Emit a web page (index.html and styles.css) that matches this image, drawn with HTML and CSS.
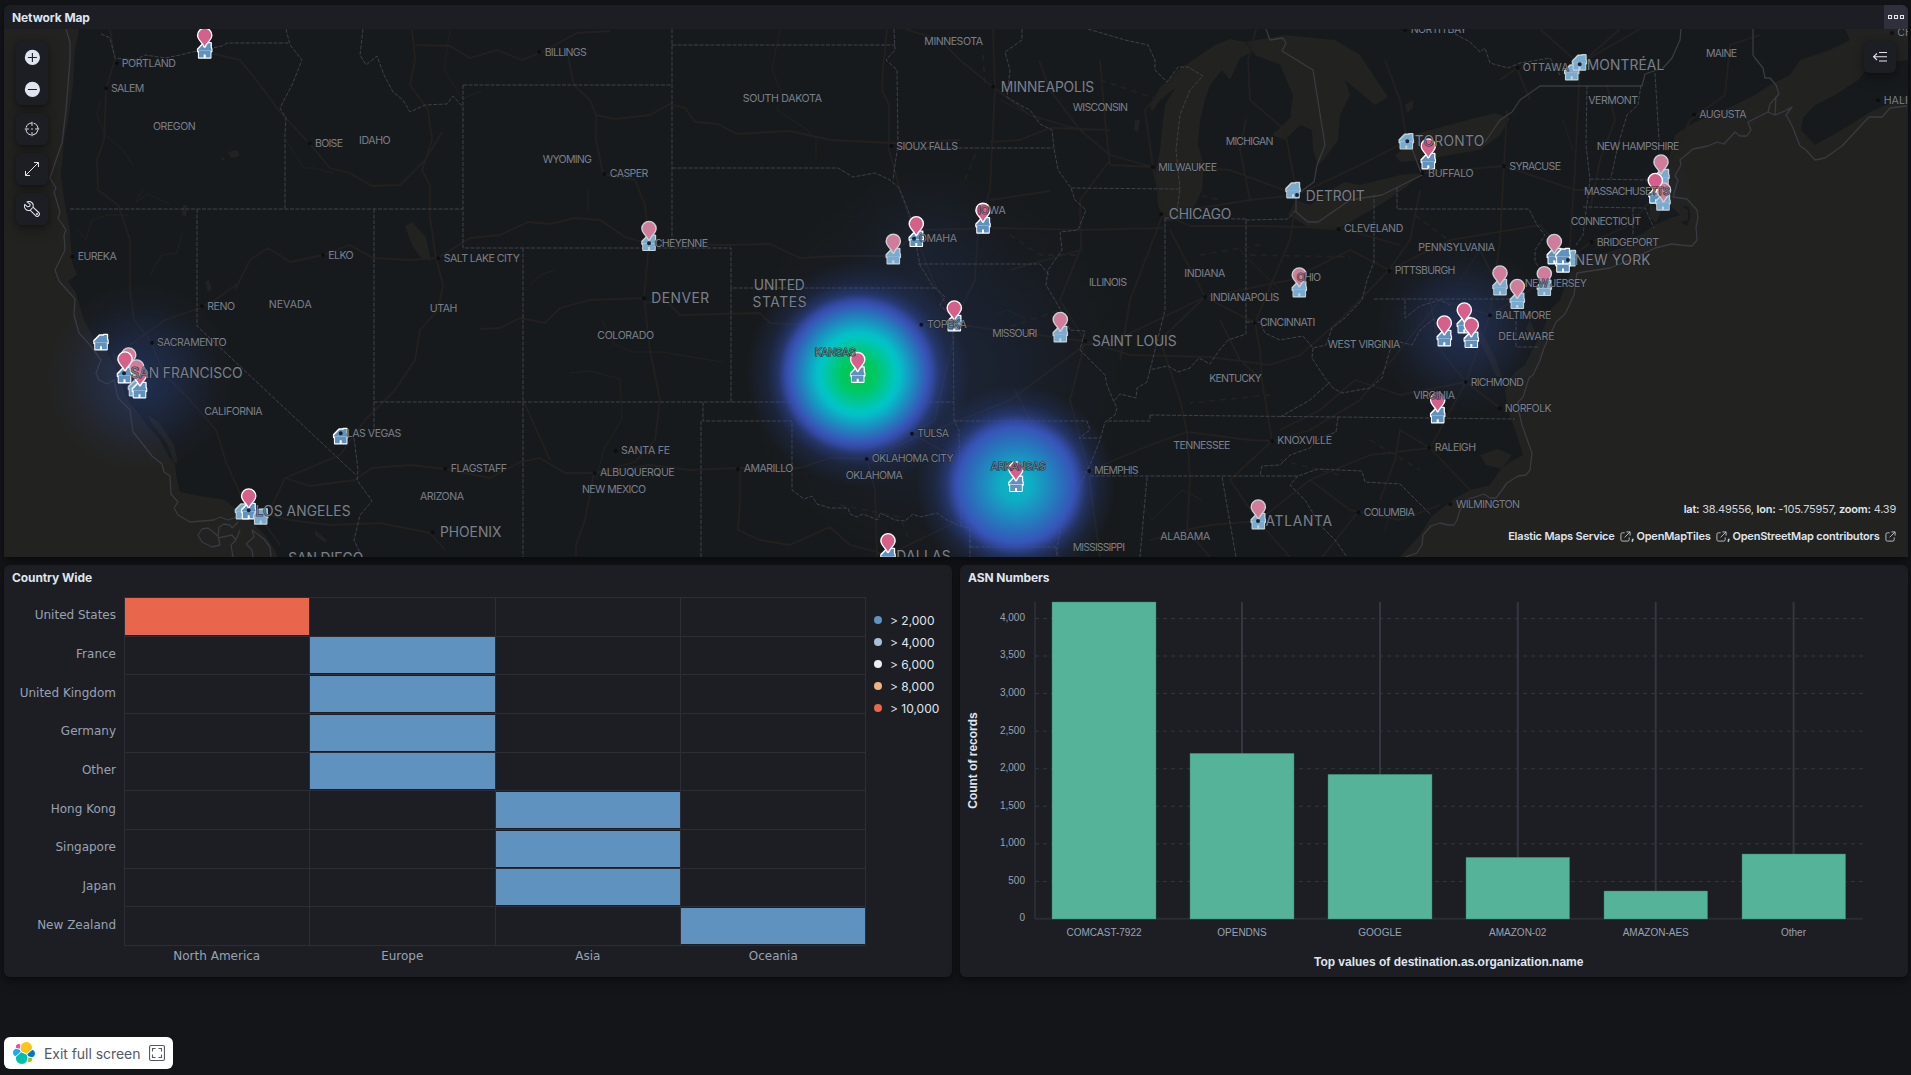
FILE: index.html
```html
<!DOCTYPE html>
<html lang="en">
<head>
<meta charset="utf-8">
<title>Network dashboard</title>
<link rel="stylesheet" href="styles.css">
</head>
<body>
<main class="dashboard">
  <section class="panel panel-map">
    <header class="panel-head">
      <h2 class="panel-title">Network Map</h2>
      <button class="panel-menu" aria-label="Panel options"><svg width="16" height="16" viewBox="0 0 16 16"><path fill="none" stroke="#dfe5ef" stroke-width="1.1" d="M.5 6.500h3v3h-3zM6.500 6.500h3v3h-3zM12.500 6.500h3v3h-3z"/></svg></button>
    </header>
    <div class="map">
      <svg class="map-canvas" viewBox="4 29 1904 528" width="1904" height="528">
        <defs>
          <radialGradient id="heat-hot"><stop offset="0" stop-color="#00c853"/><stop offset=".15" stop-color="#00c860"/><stop offset=".33" stop-color="#00c6c0"/><stop offset=".37" stop-color="#04bfc8"/><stop offset=".62" stop-color="#3853b6"/><stop offset=".66" stop-color="#3650b2" stop-opacity=".85"/><stop offset=".72" stop-color="#304ba6" stop-opacity=".5"/><stop offset=".82" stop-color="#2c479c" stop-opacity=".2"/><stop offset="1" stop-color="#2c479c" stop-opacity="0"/></radialGradient>
          <radialGradient id="heat-warm"><stop offset="0" stop-color="#08b6c6"/><stop offset=".15" stop-color="#0eaec4"/><stop offset=".58" stop-color="#3655b8"/><stop offset=".63" stop-color="#3650b2" stop-opacity=".85"/><stop offset=".71" stop-color="#304ba6" stop-opacity=".5"/><stop offset=".83" stop-color="#2c479c" stop-opacity=".2"/><stop offset="1" stop-color="#2c479c" stop-opacity="0"/></radialGradient>
          <radialGradient id="heat-low"><stop offset="0" stop-color="#2b488f" stop-opacity=".48"/><stop offset=".4" stop-color="#2b4488" stop-opacity=".3"/><stop offset=".75" stop-color="#2b4488" stop-opacity=".08"/><stop offset="1" stop-color="#2b4488" stop-opacity="0"/></radialGradient>
          <g id="home">
            <path class="halo" d="M-6.800-1.200-1.400-6.800H2.600v-.5h3.600v4.200L6.800-1.200V1.200H5.800v6.200H-5.800V1.200H-6.800z" stroke-width="2" stroke-linejoin="round"/>
            <path class="home-fill" d="M-6.800-.5-1.300-6.300H2.900v-.7h3v4L6.800-.5v.9H-6.800zM-5.800.8H5.800V7.200H1V4.200h-2V7.200h-4.800z"/>
          </g>
          <path id="pin" class="pin-fill" d="M0-3.900C-1.800-8.400-6.400-10.800-6.400-15a6.400 6.400 0 0 1 12.800 0C6.400-10.800 1.800-8.400 0-3.900z"/>
        </defs>
        <rect class="land" x="4" y="29" width="1904" height="528"/>
        <g class="water">
          <path d="M4 29H79L75 50 73 85 68 120 64 140 61 175 65 205 70 230 72 262 77 275 68 281 76 293 84 320 92 335 105 350 115 365 122 385 128 400 140 415 147 425 160 440 168 455 175 465 177 480 180 492 200 496 225 500 240 512 255 525 265 535 275 550 278 557H4z"/>
          <path d="M1400 557 1420 535 1431 517 1440 510 1455 498 1470 490 1490 485 1500 470 1510 462 1523 455 1515 430 1508 410 1505 390 1515 372 1525 365 1535 345 1545 325 1550 310 1560 300 1565 285 1572 270 1575 256 1600 246 1640 235 1655 225 1670 218 1680 215 1665 200 1663 170 1670 155 1675 135 1690 125 1710 115 1735 105 1755 95 1770 85 1790 75 1800 60 1830 50 1850 40 1845 29H1908V557z"/>
          <path d="M1190 62 1215 45 1230 39 1245 42 1252 52 1240 58 1230 80 1222 70 1210 85 1205 100 1200 120 1198 145 1204 165 1202 190 1195 205 1185 218 1165 222 1158 205 1155 175 1160 150 1163 120 1165 105 1175 88 1160 100 1152 112 1150 105 1160 88 1178 70z"/>
          <path d="M1246 42 1285 35 1335 40 1360 55 1388 97 1375 105 1345 80 1350 95 1340 115 1338 140 1325 158 1318 165 1313 150 1312 130 1300 125 1285 140 1272 135 1290 118 1293 95 1280 65 1255 55z"/>
          <path d="M1296 200 1310 205 1330 190 1345 182 1360 185 1400 175 1422 173 1405 188 1380 205 1350 222 1335 230 1310 228 1288 215z"/>
          <path d="M1395 155 1405 148 1412 135 1460 122 1495 113 1510 118 1500 135 1480 150 1450 155 1425 160 1400 162z"/>
          <path d="M405 226l8-4 5 7 8 8 3 14 2 10-10-3-9-13zM228 152l10-2 1 6-8 2zM221 157l4 2-3 2zM183 205l4 0-1 12-4-2zM205 282l4-2 3 10-4 2zM315 530l12 10-2 3-10-8zM1135 120l5 0-2 12-4-2zM1405 105l8-5 0 8-6 5z"/>
          <path d="M112 352l12 10 8 12 12 18-6 2-10-14-14-18zM148 415l12 8 14 22 4 18-4 0-6-18-18-24zM1470 308l12 24 14 28 6 18-6-2-10-22-18-36zM1530 320l6 14-4 8-6-14zM1480 455l18-6 14 6-10 14-16-4zM1650 205l12 4-6 14-6-6z"/>
        </g>
        <path class="land" d="M1801 130 1803 118 1815 105 1835 95 1858 80 1868 68 1890 62 1908 60V95L1870 112 1850 125 1815 145zM1580 252l60-14-4 6-50 14zM1680 222l8-2 0-10-6-4 6 0 3 10-4 10z"/>
        <path class="road" d="M110 29 115 60 106 88 105 120 104 140 97 160 98 190 118 205 130 240 130 290 134 320 150 340 165 375 190 400 216 430 226 462 242 498 262 520 280 545M197 50 240 60 260 85 280 112 310 144 330 168 350 173 372 186 400 185 425 160 442 132M412 29 415 60 410 85 428 110 432 140 422 170 430 185 430 218 436 258 443 285 438 310 420 330 415 360 395 390 365 420 340 455 285 478 270 510M415 45 450 46 470 58 497 50 522 60 542 52 577 33 610 31M568 56 574 85 590 100 596 115 596 140 603 174 635 180 645 205 649 243 644 298 650 350 660 400 655 440 635 462 594 473 585 520 576 545 576 557M596 115 615 119 650 115 670 104 685 108 695 122 718 124 737 134 770 132 790 131 830 140 891 143 960 140M438 258 470 238 500 235 528 222 550 224 575 218 600 220 625 237 650 244 730 245 770 244 800 258 840 256 890 256 920 230 1000 228 1080 230 1165 228M887 29 883 70 882 90 889 105 889 150 900 190 917 240 935 285 950 310 953 340 935 420 912 434 867 459 875 490 877 557M235 290 250 260 268 248 290 262 323 255 350 245 373 258 410 260 438 258M130 345 165 320 200 308 215 300 240 282M285 478 310 486 355 480 372 468 410 465 445 469 490 478 520 462 540 458 565 473 595 473 650 465 690 470 740 468 800 468 830 458 868 459 910 440 960 420 1010 400 1085 345 1110 343 1205 297 1290 280 1350 250 1389 270 1450 240 1540 225 1570 258M644 303 665 300 680 315 760 313 770 323 860 328 921 325 960 325 1085 341M740 469 740 500 738 530 760 540 790 545 830 527 850 545 888 555M644 298 590 300 560 308 545 323 520 318 500 328 480 329M523 400 550 460M248 510 290 520 330 525 380 523 430 533 445 550M993 29 995 87 990 190 978 230 975 280 960 310M993 87 1030 115 1080 130 1110 155 1153 167 1163 214 1190 226 1260 226 1340 228 1400 245M993 87 960 60 940 40 905 29M1205 297 1170 230M1205 297 1255 323 1260 350 1262 380 1272 441 1230 480 1258 521 1290 557M1085 341 1130 355 1210 357 1270 365 1300 355 1340 320 1389 270M1089 471 1150 445 1187 432 1250 440 1272 441 1310 430 1360 400 1400 350 1440 300 1490 315M1089 471 1070 400 1085 341M1187 432 1180 400 1160 340 1205 297M1187 432 1190 480 1187 530 1210 557M1089 476 1100 557M1258 521 1310 480 1370 455 1430 448 1470 490M1258 521 1210 525 1186 530 1150 540M1310 480 1350 510 1400 520 1440 505M1358 512 1320 560M1490 315 1466 382 1430 448M1490 315 1530 290 1568 260 1591 242 1630 225 1655 195 1690 120 1725 95 1730 45 1760 35M1569 260 1575 170 1580 64 1620 29M1504 166 1575 190 1650 190M1504 166 1422 173M1504 166 1500 240 1490 315M1504 166 1507 110M1517 68 1530 100M1517 68 1500 80M1579 64 1540 29M1579 64 1640 29M1407 141 1360 165 1297 195 1230 170 1160 165M1407 141 1400 100 1385 60M1297 195 1290 240 1255 323M1297 195 1250 200 1163 214M1297 195 1285 130 1250 100 1248 60 1256 29M1246 119 1240 150 1250 200M1153 167 1145 110 1180 70M1153 167 1110 165 1105 120 1100 60M1039 60 1050 90 1080 130M990 142 1020 140 1050 128 1110 130M1163 214 1130 300 1120 360M1110 160 1080 200 1081 250 1010 270M990 200 1050 191M1085 341 1060 300 1080 250M1355 380 1320 410 1280 430M1355 380 1400 395 1466 382M1430 300 1440 350 1466 382 1500 408M1480 250 1500 290M1420 190 1410 240 1389 270M1607 85 1615 120 1600 160 1590 210M1430 448 1400 430 1395 460 1380 500M1220 320 1240 360 1262 380M1015 390 1040 440 1060 470M1016 485 1089 471M1016 485 960 460 912 434M1016 485 960 520 888 555M1016 485 1060 557"/>
        <path class="minor" d="M100 100l-3 15 8 20 18 15 10 15M150 275l12-20 15-2 5-20M76 228l10 12 6-20 16-5 20 0M142 190l-6 12 12-8 22 10M286 140l18 28 10 0 20 5M450 29l-6 40 18 30 20-8M602 320l12 24 20 8 28 0 60 10M570 373l20-2 30 8 2 40-18 30-8 30M780 29l-8 40 12 30-8 10 30 20 10 10 0 20M588 190l0 20M530 285l10-10 15-5M995 315l12-5 20 10M1000 100l40 20M1140 500l12 20 30-30 20 10M1480 250l-20 30M1563 120l10 30M1240 250l40 40M1390 510l-5 20"/>
        <path class="road-dash" d="M983 55l2 30M1100 80l60 20M965 180l12-30M1180 190l40 10M1250 255l100 2M1415 215l40 30M1000 330l60-20M1280 460l60 15M1370 440l50 30M840 505l60 12 8 20M1010 235l30 20 40 0M1270 395l-80 8M1200 255l60-10"/>
        <g class="state">
          <path d="M101 34 110 38 115 58 135 60 145 55 165 58 180 55 197 51 222 46 227 43H288M286 29 290 45 302 60 292 85 280 108 286 118 285 135V209M363 29 360 55 366 65 377 56 384 75 393 92 403 100 410 112 425 105 447 104 453 96 463 107M70 209H463M463 85V248H731V288H937M463 85H672M197 209V326L356 475M374 209V430M354 438 358 470 357 480 372 501 360 515 354 540 362 557M523 248V557M374 402H954M672 29V240M672 45H895M672 168H838L853 177 875 173 890 180 899 188 908 210 917 235 917 250 920 265 932 285 945 297 940 305 953 318 954 421 959 430 961 526M731 288V402M703 402V421H792V490L804 499 812 496 817 504 830 508 848 508 850 514 857 517 863 514 878 520 880 513 895 520 905 521 913 514 920 517 937 513 947 520 960 526 970 528V557M701 421V557M894 29 895 50 886 60 897 70 898 145 895 165 893 180M898 148H1053M1022 29V40L1005 52 1010 70 1007 97 1020 105 1030 110 1040 124 1052 130 1054 148 1058 170 1071 188 1075 200 1086 210 1078 230 1060 232 1062 250 1048 270 1046 285 1062 312 1070 330 1085 331 1080 350 1105 375 1107 385 1113 400 1117 408 1115 415 1105 422 1100 440 1092 460 1085 475 1075 495 1062 520 1057 548V557M918 264 1040 264 1049 275M1071 188 1180 189 1177 212M1165 218V310L1160 330 1150 370 1147 382 1137 388 1136 398 1120 394 1113 402M1165 218 1246 219V334L1228 340 1218 352 1210 364 1199 358 1190 368 1178 372 1168 366 1149 370M1246 220 1288 219 1296 210M1246 322 1260 322 1265 333 1280 340 1303 336 1313 348 1326 345 1332 328 1345 318 1362 300 1367 280 1374 262V195M1313 348 1312 358 1325 378 1333 388 1342 393 1370 388 1382 378 1390 350 1400 342 1412 345 1420 330 1435 318M1374 299H1520M1397 188V209H1529L1537 225 1545 235 1535 250 1535 262 1545 275M1405 300V318L1420 306 1440 300 1452 306M1150 415 1240 416 1338 417 1515 419M1280 417 1310 400 1330 382M1090 476H1298L1318 469 1362 471 1365 482 1400 484 1431 515M954 421H1087L1090 430 1079 438H1100M1108 421H1150V414M1147 477 1140 557M1222 477 1236 557M1298 476 1290 485 1305 500 1320 525 1335 540 1347 557M1338 417 1336 432 1320 438 1310 448 1290 455 1280 465 1262 466 1260 476M970 547H1057M970 528V547M1088 29 1125 40 1148 45 1155 60 1155 70 1167 82 1178 67H1188L1203 76 1190 90 1180 115 1176 150 1180 189M1455 34 1470 42 1480 52 1485 48 1490 63 1508 68 1520 63 1550 58 1560 75M1587 85 1586 145 1590 180 1583 235 1576 245M1641 85 1638 105 1627 115 1618 145 1611 178M1655 73 1659 140M1590 179 1650 180M1583 207 1645 208 1654 228M1633 208V236M1516 310V347H1538"/>
        </g>
        <path class="coast" d="M66 29 70 42 70 60 66 110 62 143 57 157 50 178 56 188 54 192 60 212 58 218 66 230 64 235 65 250 55 270 59 281 75 299 74 315 79 333 90 345 101 360 96 373 99 380 107 384 114 380 118 398 130 410 133 432 142 443 152 456 162 464 164 472 170 476 171 494 178 502 174 508 178 515 190 522 214 520 220 517 228 520 237 517M218 536 220 545 212 547 202 542 198 535 202 529 208 528 218 536 219 527 224 524 230 525 232 528 238 522M218 538 232 535 236 540 231 545 233 557M236 540 240 530M246 544 252 550 253 557M246 544 254 537 252 530 264 539 270 547 271 557M1907 106 1890 108 1882 117H1869L1842 146 1825 158 1815 160 1806 150 1800 146 1793 128 1789 120 1786 115 1792 107 1785 111 1775 115 1768 112 1770 104 1779 94 1776 85 1770 78 1765 78 1763 68 1755 58 1753 55V29M1775 115 1776 96M1768 112 1748 122 1751 130 1747 136H1740L1735 132 1724 144 1717 142 1708 146 1693 149 1680 160 1681 165 1675 176 1678 180 1673 197 1687 199 1697 210 1698 218 1696 227 1697 240 1692 246 1680 245 1672 244 1655 248 1630 260 1610 268 1590 271 1577 273 1574 295 1565 314 1556 322 1550 335 1544 348 1540 360 1533 375 1529 378 1523 397 1518 402 1519 412 1522 425 1532 453 1530 470 1526 475 1518 476 1507 483 1502 490 1496 498H1490L1484 494 1475 497 1466 500 1460 510 1457 520 1454 525H1448L1440 523 1431 526 1423 535 1422 545 1417 553 1405 557M1266 29 1270 40 1283 38 1286 43 1282 51 1313 70 1325 145 1317 165 1314 182 1296 195 1296 212 1308 222H1318L1350 200 1382 195 1422 175 1417 162 1412 148M1485 142 1500 120 1512 112 1520 100 1540 86H1642L1645 74 1663 68 1672 58 1680 40 1681 29"/>
        <g class="heat">
          <circle cx="140" cy="378" r="96" fill="url(#heat-low)"/>
          <circle cx="1462" cy="328" r="88" fill="url(#heat-low)"/>
          <circle cx="935" cy="370" r="200" fill="url(#heat-low)" opacity=".5"/>
          <circle cx="925" cy="245" r="85" fill="url(#heat-low)" opacity=".2"/>
          <circle cx="1662" cy="190" r="40" fill="url(#heat-low)" opacity=".15"/>
          <circle cx="858.500" cy="374" r="112" fill="url(#heat-hot)"/>
          <circle cx="1016" cy="485" r="100" fill="url(#heat-warm)"/>
        </g>
        <g class="homes">
          <use href="#home" x="204.7" y="50.3"/><use href="#home" x="101" y="342"/><use href="#home" x="124.5" y="375"/><use class="dim" href="#home" x="135.5" y="388"/><use href="#home" x="139.5" y="390"/><use href="#home" x="340.7" y="436"/><use class="dim" href="#home" x="242.5" y="511"/><use href="#home" x="248.7" y="511"/><use class="dim" href="#home" x="260.7" y="516.3"/>
          <use class="dim" href="#home" x="649" y="242.7"/><use class="dim" href="#home" x="893.3" y="256"/><use href="#home" x="916.3" y="238.7"/><use href="#home" x="954.3" y="323"/><use href="#home" x="857.7" y="374.6"/><use href="#home" x="888" y="556"/><use href="#home" x="983" y="225.3"/>
          <use class="dim" href="#home" x="1293" y="190"/><use class="dim" href="#home" x="1406.3" y="141.2"/><use href="#home" x="1428.3" y="161"/><use class="dim" href="#home" x="1299.3" y="289"/><use class="dim" href="#home" x="1060.3" y="334"/><use href="#home" x="1016" y="483.7"/><use class="dim" href="#home" x="1258.3" y="521"/>
          <use href="#home" x="1437.7" y="415"/><use href="#home" x="1444.3" y="338"/><use href="#home" x="1464.3" y="325"/><use href="#home" x="1471.3" y="339.7"/><use class="dim" href="#home" x="1500" y="287"/><use class="dim" href="#home" x="1517.3" y="300.7"/><use class="dim" href="#home" x="1544.3" y="287.7"/>
          <use href="#home" x="1554.3" y="256"/><use class="dim" href="#home" x="1569" y="258"/><use href="#home" x="1563" y="264.3"/><use href="#home" x="1563" y="256"/>
          <use class="dim" href="#home" x="1662" y="177"/><use href="#home" x="1656" y="195.3"/><use class="dim" href="#home" x="1663" y="202.3"/><use class="dim" href="#home" x="1571.7" y="72"/><use class="dim" href="#home" x="1579.5" y="62.3"/>
        </g>
        <g class="pins">
          <use href="#pin" x="204.7" y="50.3"/><use class="dim" href="#pin" x="128.7" y="370"/><use href="#pin" x="140" y="389"/><use class="dim" href="#pin" x="136.7" y="382"/><use href="#pin" x="125" y="374"/><use href="#pin" x="248.7" y="511"/><use class="dim" href="#pin" x="649" y="243.5"/><use class="dim" href="#pin" x="893.3" y="256.3"/><use href="#pin" x="916.3" y="238.7"/><use href="#pin" x="954.3" y="323"/><use href="#pin" x="857.7" y="374.6"/><use href="#pin" x="888" y="555.7"/><use href="#pin" x="983" y="225.3"/>
          <use href="#pin" x="1428.3" y="161"/><use class="dim" href="#pin" x="1299.3" y="290"/><use class="dim" href="#pin" x="1060.3" y="334.5"/><use href="#pin" x="1016" y="484"/><use class="dim" href="#pin" x="1258.3" y="522"/><use href="#pin" x="1437.7" y="415"/><use href="#pin" x="1444.3" y="338"/><use href="#pin" x="1464.3" y="325"/><use href="#pin" x="1471.3" y="340"/><use class="dim" href="#pin" x="1500" y="288"/><use class="dim" href="#pin" x="1517.3" y="301.5"/><use class="dim" href="#pin" x="1544.3" y="288.7"/><use class="dim" href="#pin" x="1554.3" y="256.5"/><use class="dim" href="#pin" x="1661" y="177"/><use class="dim" href="#pin" x="1663.5" y="205"/><use href="#pin" x="1655.3" y="195.5"/>
        </g>
        <path class="town" d="M116.7 63.3h0M106 88.3h0M309.7 143.3h0M72.3 256.7h0M323 255h0M438.3 258.3h0M202 306.3h0M152 342.7h0M124 373.3h0M340.7 433.3h0M248.7 510.3h0M445.3 468.7h0M432.7 532.3h0M539.3 52h0M604.3 174h0M649 243.3h0M914 238.7h0M891.3 146h0M644 298.3h0M615.7 451h0M594.7 473h0M921.3 324.7h0M912 433.7h0M866.7 459h0M738 469h0M993.3 86.7h0M1152.7 167h0M1161.3 214.3h0M1297 195h0M1338.7 229h0M1389.3 270.7h0M1205.3 297h0M1254.7 322.7h0M1085 341h0M1089.3 471h0M1272.3 441h0M1429.3 447.7h0M1358.3 512.3h0M1258 521h0M1407.3 141.3h0M1422.3 173h0M1517.7 68h0M1579.7 64.3h0M1504 166.3h0M1694 114.7h0M1878 100.3h0M1591.7 242h0M1568 260h0M1490 315.3h0M1465.7 382h0M1499.7 408.3h0M1450.3 504.3h0M1405.3 30h0M1892 33h0"/>
        <g class="places">
          <text x="121.7" y="67" textLength="54.3">PORTLAND</text><text x="111" y="92" textLength="33.3">SALEM</text><text x="153" y="129.7" textLength="42.7">OREGON</text><text x="315" y="146.7" textLength="28">BOISE</text><text x="359" y="143.7" textLength="31.7">IDAHO</text><text x="77.7" y="260" textLength="39">EUREKA</text><text x="328.3" y="258.7" textLength="25.3">ELKO</text><text x="443.7" y="261.7" textLength="76.3">SALT LAKE CITY</text>
          <text x="207.3" y="310" textLength="27.7">RENO</text><text x="268.7" y="308.3" textLength="43">NEVADA</text><text x="429.7" y="312" textLength="27.7">UTAH</text><text x="157" y="346" textLength="69.7">SACRAMENTO</text><text x="204.3" y="415" textLength="58.3">CALIFORNIA</text><text x="346.7" y="436.7" textLength="54.7">LAS VEGAS</text><text x="420" y="499.7" textLength="44">ARIZONA</text><text x="450.7" y="472.3" textLength="56.3">FLAGSTAFF</text>
          <text x="544.7" y="55.7" textLength="42">BILLINGS</text><text x="542.7" y="163" textLength="49.3">WYOMING</text><text x="609.7" y="177.3" textLength="38.7">CASPER</text><text x="742.7" y="102" textLength="79.3">SOUTH DAKOTA</text><text x="654.7" y="247" textLength="53.3">CHEYENNE</text><text x="919" y="242" textLength="38">OMAHA</text><text x="896.3" y="149.7" textLength="61.7">SIOUX FALLS</text><text x="924.3" y="45" textLength="58.7">MINNESOTA</text>
          <text x="597.3" y="338.7" textLength="56.7">COLORADO</text><text x="814.7" y="356" textLength="41">KANSAS</text><text x="927" y="328.3" textLength="39.7">TOPEKA</text><text x="621" y="454.3" textLength="49">SANTA FE</text><text x="600" y="476.3" textLength="74.7">ALBUQUERQUE</text><text x="582" y="493" textLength="64">NEW MEXICO</text><text x="917.3" y="437.3" textLength="31.7">TULSA</text><text x="871.7" y="462.3" textLength="82">OKLAHOMA CITY</text><text x="845.7" y="479.3" textLength="57">OKLAHOMA</text><text x="743.7" y="472.3" textLength="49.7">AMARILLO</text>
          <text x="1072.7" y="111" textLength="55.3">WISCONSIN</text><text x="1225.7" y="144.7" textLength="47.7">MICHIGAN</text><text x="1158.3" y="170.7" textLength="58.7">MILWAUKEE</text><text x="978" y="213.7" textLength="27.7">IOWA</text><text x="1344" y="232.3" textLength="59.3">CLEVELAND</text><text x="1184.3" y="276.7" textLength="41">INDIANA</text><text x="1089" y="286.3" textLength="38">ILLINOIS</text><text x="1296.7" y="280.7" textLength="24.3">OHIO</text><text x="1394.7" y="274" textLength="60.7">PITTSBURGH</text><text x="1418.3" y="251.3" textLength="76.7">PENNSYLVANIA</text><text x="1410.7" y="33.3" textLength="56.3">NORTH BAY</text><text x="1428" y="176.7" textLength="45.7">BUFFALO</text>
          <text x="1210.3" y="300.7" textLength="69">INDIANAPOLIS</text><text x="1260" y="326.3" textLength="55.3">CINCINNATI</text><text x="992.3" y="337.3" textLength="45">MISSOURI</text><text x="1327.7" y="348.3" textLength="72.7">WEST VIRGINIA</text><text x="1209.3" y="382.3" textLength="52.3">KENTUCKY</text><text x="1173.3" y="449.3" textLength="57">TENNESSEE</text><text x="1277.3" y="444.3" textLength="54.7">KNOXVILLE</text><text x="1094.3" y="474.3" textLength="44.3">MEMPHIS</text><text x="990.7" y="470" textLength="55">ARKANSAS</text><text x="1363.7" y="515.7" textLength="51">COLUMBIA</text><text x="1160.3" y="540.3" textLength="50">ALABAMA</text><text x="1072.7" y="550.7" textLength="52.3">MISSISSIPPI</text><text x="1413.3" y="399" textLength="41.7">VIRGINIA</text>
          <text x="1522.7" y="71.3" textLength="46">OTTAWA</text><text x="1588.3" y="104" textLength="49.7">VERMONT</text><text x="1706" y="57" textLength="31">MAINE</text><text x="1699.3" y="118" textLength="47.3">AUGUSTA</text><text x="1883.7" y="103.7" textLength="44">HALIFAX</text><text x="1897.3" y="36.3" textLength="96">CHARLOTTETOWN</text><text x="1596.7" y="150" textLength="82.7">NEW HAMPSHIRE</text><text x="1509.3" y="170" textLength="51.7">SYRACUSE</text><text x="1584" y="195.3" textLength="85.7">MASSACHUSETTS</text><text x="1570.7" y="224.7" textLength="70.3">CONNECTICUT</text><text x="1596.7" y="246" textLength="62.3">BRIDGEPORT</text><text x="1524.7" y="286.7" textLength="62.3">NEW JERSEY</text>
          <text x="1495.3" y="319" textLength="56">BALTIMORE</text><text x="1498.3" y="340" textLength="56.3">DELAWARE</text><text x="1470.7" y="385.7" textLength="53.3">RICHMOND</text><text x="1504.7" y="411.7" textLength="47">NORFOLK</text><text x="1434.7" y="451" textLength="41.3">RALEIGH</text><text x="1456" y="507.7" textLength="64">WILMINGTON</text>
        </g>
        <g class="places metro">
          <text x="130.500" y="378" textLength="112">SAN FRANCISCO</text><text x="255.500" y="515.500" textLength="95">LOS ANGELES</text><text x="440" y="536.7" textLength="61.4">PHOENIX</text><text x="288.2" y="562.7" textLength="75">SAN DIEGO</text><text x="753.8" y="290" textLength="51">UNITED</text><text x="752.5" y="307.300" textLength="54">STATES</text><text x="651.2" y="303" textLength="58">DENVER</text><text x="896.2" y="560.7" textLength="54.5">DALLAS</text><text x="1000.8" y="91.600" textLength="93.4">MINNEAPOLIS</text><text x="1305.8" y="200.500" textLength="58.8">DETROIT</text><text x="1168.8" y="218.7" textLength="62.5">CHICAGO</text><text x="1414.8" y="146.3" textLength="69.5">TORONTO</text><text x="1092" y="346" textLength="84.500">SAINT LOUIS</text><text x="1265.5" y="526" textLength="66.5">ATLANTA</text><text x="1586.8" y="69.500" textLength="77.5">MONTRÉAL</text><text x="1574.8" y="265" textLength="75.8">NEW YORK</text>
        </g>
      </svg>
      <div class="map-tools">
        <div class="tool-group">
          <button class="tool" aria-label="Zoom in"><svg width="16" height="16" viewBox="0 0 16 16"><circle cx="8.4" cy="8.4" r="7.6" fill="#dfe5ef"/><path d="M8.4 4v9M3.9 8.5h9" stroke="#1d1e24" stroke-width="1.1"/></svg></button>
          <button class="tool" aria-label="Zoom out"><svg width="16" height="16" viewBox="0 0 16 16"><circle cx="8.4" cy="8.4" r="7.6" fill="#dfe5ef"/><path d="M3.9 8.5h9" stroke="#1d1e24" stroke-width="1.1"/></svg></button>
        </div>
        <div class="tool-group"><button class="tool" aria-label="Fit to data"><svg width="16" height="16" viewBox="0 0 16 16" fill="none" stroke="#dfe5ef"><circle cx="8" cy="8" r="6" stroke-dasharray="7.4 2.02" stroke-dashoffset="-1"/><path d="M8 .8v4M8 11.2v4M.8 8h4M11.2 8h4"/><circle cx="8" cy="8" r=".8" fill="#dfe5ef" stroke="none"/></svg></button></div>
        <div class="tool-group"><button class="tool" aria-label="Expand"><svg width="16" height="16" viewBox="0 0 16 16" fill="none" stroke="#dfe5ef"><path d="M1.500 14.500l13-13M10 1.500h4.500V6M1.500 10v4.500H6"/></svg></button></div>
        <div class="tool-group"><button class="tool" aria-label="Tools"><svg width="16" height="16" viewBox="0 0 16 16" fill="none" stroke="#dfe5ef" stroke-width="1.05" stroke-linejoin="round"><path d="M3 .9a4.3 4.3 0 0 1 6 5.2l5.700 5.400a2.200 2.200 0 0 1-3.100 3.200L6.100 9.200A4.300 4.300 0 0 1 .8 3.400l2.700 2.400 2.200-.5.5-2z"/><path d="M6.500 8.800l2.300-2.300"/><circle cx="13" cy="13" r=".5"/></svg></button></div>
      </div>
      <div class="tool-group layers"><button class="tool" aria-label="Show layers"><svg width="16" height="16" viewBox="0 0 16 16" fill="none" stroke="#dfe5ef" stroke-width="1.1"><path d="M7 3.500h8M1.800 7.700H15M7 12h8M5 4.500L1.600 7.700 5 11"/></svg></button></div>
      <div class="map-info">
        <p class="coords"><b>lat:</b> 38.49556, <b>lon:</b> -105.75957, <b>zoom:</b> 4.39</p>
        <p class="credits"><span>Elastic Maps Service</span><svg class="ext" viewBox="0 0 12 12"><path d="M5 2H2.500A1.500 1.500 0 0 0 1 3.500V9.500A1.500 1.500 0 0 0 2.500 11H8.500A1.500 1.500 0 0 0 10 9.500V7M7 1h4v4M11 1L5 7"/></svg><span class="sep">,</span><span>OpenMapTiles</span><svg class="ext" viewBox="0 0 12 12"><path d="M5 2H2.500A1.500 1.500 0 0 0 1 3.500V9.500A1.500 1.500 0 0 0 2.500 11H8.500A1.500 1.500 0 0 0 10 9.500V7M7 1h4v4M11 1L5 7"/></svg><span class="sep">,</span><span>OpenStreetMap contributors</span><svg class="ext" viewBox="0 0 12 12"><path d="M5 2H2.500A1.500 1.500 0 0 0 1 3.500V9.500A1.500 1.500 0 0 0 2.500 11H8.500A1.500 1.500 0 0 0 10 9.500V7M7 1h4v4M11 1L5 7"/></svg></p>
      </div>
    </div>
  </section>

  <div class="row">
    <section class="panel">
      <header class="panel-head"><h2 class="panel-title">Country Wide</h2></header>
      <div class="matrix-wrap">
        <div class="matrix-rows"><span>United States</span><span>France</span><span>United Kingdom</span><span>Germany</span><span>Other</span><span>Hong Kong</span><span>Singapore</span><span>Japan</span><span>New Zealand</span></div>
        <div class="matrix">
          <i class="hot"></i><i></i><i></i><i></i>
          <i></i><i class="low"></i><i></i><i></i>
          <i></i><i class="low"></i><i></i><i></i>
          <i></i><i class="low"></i><i></i><i></i>
          <i></i><i class="low"></i><i></i><i></i>
          <i></i><i></i><i class="low"></i><i></i>
          <i></i><i></i><i class="low"></i><i></i>
          <i></i><i></i><i class="low"></i><i></i>
          <i></i><i></i><i></i><i class="low"></i>
        </div>
        <ul class="legend">
          <li class="k1">&gt; 2,000</li><li class="k2">&gt; 4,000</li><li class="k3">&gt; 6,000</li><li class="k4">&gt; 8,000</li><li class="k5">&gt; 10,000</li>
        </ul>
        <div class="matrix-cols"><span>North America</span><span>Europe</span><span>Asia</span><span>Oceania</span></div>
      </div>
    </section>

    <section class="panel">
      <header class="panel-head"><h2 class="panel-title">ASN Numbers</h2></header>
      <svg class="bars" viewBox="960 589 948 388" width="948" height="388">
        <path class="axis" d="M1035 602V919M1035 918.800H1863"/>
        <path class="guide" d="M1242 602V919M1380 602V919M1517.800 602V919M1655.700 602V919M1793.600 602V919"/>
        <path class="grid" d="M1035 618.500H1863M1035 656H1863M1035 693.500H1863M1035 731.200H1863M1035 768.700H1863M1035 806.300H1863M1035 843.800H1863M1035 881.400H1863"/>
        <g class="bar">
          <rect x="1052" y="602" width="104" height="317"/><rect x="1190" y="753.300" width="104" height="165.700"/><rect x="1328" y="774.300" width="104" height="144.700"/><rect x="1466" y="857.300" width="103.600" height="61.700"/><rect x="1604" y="891" width="103.600" height="28"/><rect x="1742" y="854" width="103.600" height="65"/>
        </g>
        <g class="tick tick-y">
          <text x="1025" y="621">4,000</text><text x="1025" y="658.400">3,500</text><text x="1025" y="696">3,000</text><text x="1025" y="733.600">2,500</text><text x="1025" y="771">2,000</text><text x="1025" y="808.600">1,500</text><text x="1025" y="846">1,000</text><text x="1025" y="883.600">500</text><text x="1025" y="921">0</text>
        </g>
        <g class="tick tick-x">
          <text x="1104" y="936">COMCAST-7922</text><text x="1242" y="936">OPENDNS</text><text x="1380" y="936">GOOGLE</text><text x="1517.700" y="936">AMAZON-02</text><text x="1655.700" y="936">AMAZON-AES</text><text x="1793.500" y="936">Other</text>
        </g>
        <text class="axis-title" x="1448.700" y="965.700" textLength="269.500">Top values of destination.as.organization.name</text>
        <text class="axis-title" transform="translate(977 760.500) rotate(-90)" textLength="96.500">Count of records</text>
      </svg>
    </section>
  </div>
</main>

<footer class="foot">
  <button class="exit">
    <svg width="24" height="24" viewBox="0 0 32 32"><path fill="#fec514" d="M12.580 13.787l7.002 3.211 7.066-6.213a7.850 7.850 0 0 0 .152-1.557c0-4.298-3.507-7.800-7.811-7.800a7.770 7.770 0 0 0-6.431 3.391l-1.176 6.126z"/><path fill="#00bfb3" d="M5.333 21.228a7.964 7.964 0 0 0-.151 1.586c0 4.314 3.517 7.823 7.830 7.823a7.800 7.800 0 0 0 6.458-3.423l1.166-6.105-1.556-2.989-7.030-3.218z"/><path fill="#f04e98" d="M5.288 9.067l4.799 1.137L11.140 4.720a3.785 3.785 0 0 0-6.083 3.030c0 .466.085.905.231 1.317"/><path fill="#1ba9f5" d="M4.870 10.214A5.440 5.440 0 0 0 1.263 15.300a5.431 5.431 0 0 0 3.483 5.060l6.735-6.118-1.237-2.656z"/><path fill="#93c90e" d="M20.870 27.291a3.752 3.752 0 0 0 2.287.783 3.778 3.778 0 0 0 3.543-5.090l-4.796-1.127z"/><path fill="#07c" d="M21.845 20.460l5.280 1.239A5.440 5.440 0 0 0 30.730 16.600a5.422 5.422 0 0 0-3.490-5.051l-6.906 6.072z"/></svg>
    <span class="exit-label">Exit full screen</span>
    <svg width="16" height="16" viewBox="0 0 16 16" fill="none" stroke="#535966" stroke-width="1.100"><rect x=".55" y=".55" width="14.900" height="14.900" rx="1.500"/><path d="M3.500 6.500v-3h3M9.500 3.500h3v3M12.500 9.500v3h-3M6.500 12.500h-3v-3"/></svg>
  </button>
</footer>
</body>
</html>
```
FILE: styles.css
```css
* { box-sizing: border-box; }
body { margin: 0; height: 1075px; display: flex; flex-direction: column; background: #141519; font-family: Inter, sans-serif; color: #dfe5ef; overflow: hidden; }
h2, p, ul { margin: 0; padding: 0; }
button { border: 0; padding: 0; background: none; font: inherit; color: inherit; display: flex; align-items: center; justify-content: center; }
svg { display: block; flex: none; }

.dashboard { display: flex; flex-direction: column; gap: 8px; padding: 5px 3px 0 4px; }
.row { display: grid; grid-template-columns: 948px 948px; gap: 8px; }
.panel { background: #1d1e24; border-radius: 6px; height: 412px; overflow: hidden; box-shadow: 0 2px 5px rgba(0, 0, 0, .3), 0 5px 12px rgba(0, 0, 0, .25); }
.panel-map { height: 552px; border-radius: 6px 6px 0 0; }
.panel-head { height: 24px; display: flex; justify-content: space-between; align-items: center; padding-left: 8px; }
.panel-title { padding-top: 2px; font-size: 12px; line-height: 22px; font-weight: 700; letter-spacing: -.1px; color: #dfe5ef; }
.panel-menu { width: 24px; height: 24px; background: #2f303b; }

/* map */
.map { position: relative; height: 528px; }
.land { fill: #171a1c; }
.water { fill: #222220; }
.road, .minor, .road-dash { fill: none; stroke: #22211f; stroke-width: 1.8; stroke-linejoin: round; }
.minor { stroke-width: 1; }
.road-dash { stroke-dasharray: 6 5; }
.state path { fill: none; stroke: #3e404a; stroke-width: 1; stroke-dasharray: 4 1.5; }
.coast { fill: none; stroke: #3a3a42; stroke-width: 1.3; stroke-linejoin: round; }
.town { fill: none; stroke: #0b0c0e; stroke-width: 4; stroke-linecap: round; opacity: .85; }
.halo { fill: var(--halo, #fff); stroke: var(--halo, #fff); }
.home-fill { fill: var(--home, #6092c0); }
.pin-fill { fill: var(--pin, #d6608a); stroke: var(--halo, #fff); stroke-width: 2.8px; stroke-linejoin: round; paint-order: stroke; }
.dim { --halo: #c9d2d5; --home: #79aad0; --pin: #d07c9a; }
.places text { font: 400 10.6px Inter, sans-serif; fill: #7a808b; stroke: #191b1f; stroke-width: 1.2px; stroke-opacity: .8; paint-order: stroke; }
.places.metro text { font-size: 13.8px; }
.map-tools { position: absolute; left: 12px; top: 12px; display: flex; flex-direction: column; gap: 8px; }
.tool-group { width: 32px; background: #1d1e24; border-radius: 6px; box-shadow: 0 1px 5px rgba(0, 0, 0, .3), 0 6px 14px rgba(0, 0, 0, .25); }
.tool { width: 32px; height: 32px; }
.layers { position: absolute; right: 12px; top: 12px; }
.map-info { position: absolute; right: 12px; bottom: 12px; display: flex; flex-direction: column; align-items: flex-end; gap: 9px; font-size: 11px; line-height: 18px; letter-spacing: -.2px; white-space: nowrap; color: #cfd4de; }
.coords { letter-spacing: -.22px; }
.coords b, .credits { font-weight: 600; color: #dfe5ef; }
.credits { display: flex; align-items: center; }
.ext { width: 11px; height: 11px; margin-left: 5.5px; fill: none; stroke: #c0c5cf; stroke-width: 1; }
.sep { margin-right: 2px; }

/* heatmap */
.matrix-wrap { display: grid; grid-template-columns: 112px 742px 1fr; grid-template-rows: 349px 22px; column-gap: 8px; padding-top: 8px; }
.matrix-rows { display: grid; grid-template-rows: repeat(9, 1fr); align-items: center; justify-items: end; margin: -1px 0 2px; font: 12px "DejaVu Sans", sans-serif; color: #98a2b3; }
.matrix { display: grid; grid-template-columns: repeat(4, 1fr); grid-template-rows: repeat(9, 1fr); border-right: 1px solid #2c2d35; border-bottom: 1px solid #2c2d35; }
.matrix i { border-left: 1px solid #2c2d35; border-top: 1px solid #2c2d35; padding: .5px 0 1px; background-clip: content-box; }
.matrix .hot { background-color: #e7664c; padding: 0 0 1px; }
.matrix .low { background-color: #6092c0; }
.matrix-cols { grid-column: 2; display: grid; grid-template-columns: repeat(4, 1fr); text-align: center; font: 12px/20px "DejaVu Sans", sans-serif; color: #98a2b3; }
.legend { list-style: none; padding-top: 13px; font-size: 12px; line-height: 22px; }
.legend li { display: flex; align-items: center; gap: 8px; white-space: nowrap; color: #dfe5ef; }
.legend li::before { content: ""; width: 8px; height: 8px; margin-top: -2px; border-radius: 50%; background: var(--key); }
.k1 { --key: #6092c0; }
.k2 { --key: #a8bfda; }
.k3 { --key: #ebeff5; }
.k4 { --key: #ecb385; }
.k5 { --key: #e7664c; }

/* bar chart */
.axis { fill: none; stroke: #2a2c33; stroke-width: 2; }
.guide { fill: none; stroke: #343640; stroke-width: 2; }
.grid { fill: none; stroke: #33363e; stroke-width: 1; stroke-dasharray: 4 4; }
.bar rect { fill: #54b399; stroke: #3b7c6c; stroke-width: .4; }
.tick text { font: 10px "Liberation Sans", sans-serif; fill: #98a2b3; }
.tick-y text { text-anchor: end; }
.tick-x text { text-anchor: middle; }
.axis-title { font: bold 12px "Liberation Sans", sans-serif; fill: #dfe5ef; text-anchor: middle; }

.foot { margin-top: auto; padding: 0 0 6px 4px; display: flex; }
.exit { width: 169px; height: 32px; padding: 0 8px; justify-content: flex-start; background: #fff; border-radius: 6px; color: #535966; font-size: 14px; }
.exit-label { margin: 0 9px 0 8px; width: 96px; white-space: nowrap; text-align: left; letter-spacing: -.05px; }
```
